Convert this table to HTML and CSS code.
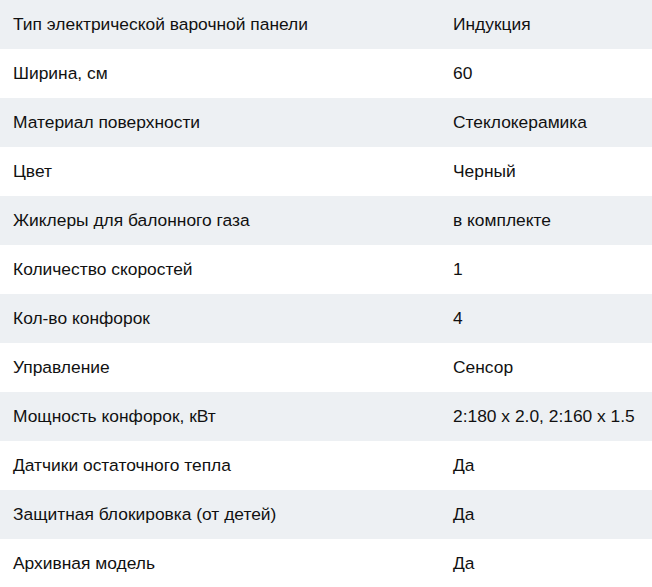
FILE: index.html
```html
<!DOCTYPE html>
<html lang="ru">
<head>
<meta charset="utf-8">
<link rel="stylesheet" href="styles.css">
</head>
<body>
<table class="specs">
  <tr><td class="name">Тип электрической варочной панели</td><td class="val">Индукция</td></tr>
  <tr><td class="name">Ширина, см</td><td class="val">60</td></tr>
  <tr><td class="name">Материал поверхности</td><td class="val">Стеклокерамика</td></tr>
  <tr><td class="name">Цвет</td><td class="val">Черный</td></tr>
  <tr><td class="name">Жиклеры для балонного газа</td><td class="val">в комплекте</td></tr>
  <tr><td class="name">Количество скоростей</td><td class="val">1</td></tr>
  <tr><td class="name">Кол-во конфорок</td><td class="val">4</td></tr>
  <tr><td class="name">Управление</td><td class="val">Сенсор</td></tr>
  <tr><td class="name">Мощность конфорок, кВт</td><td class="val">2:180 x 2.0, 2:160 x 1.5</td></tr>
  <tr><td class="name">Датчики остаточного тепла</td><td class="val">Да</td></tr>
  <tr><td class="name">Защитная блокировка (от детей)</td><td class="val">Да</td></tr>
  <tr><td class="name">Архивная модель</td><td class="val">Да</td></tr>
</table>
</body>
</html>
```

FILE: styles.css
```css
html, body {
  margin: 0;
  padding: 0;
  background: #fff;
}
.specs {
  width: 652px;
  border-collapse: collapse;
  font-family: "Liberation Sans", Arial, sans-serif;
  font-size: 17.4px;
  color: #111;
}
.specs tr:nth-child(odd) {
  background: #edf0f3;
}
.specs td {
  height: 49px;
  padding: 0 0 1px 13px;
  vertical-align: middle;
  box-sizing: border-box;
  white-space: nowrap;
}
.specs td.name {
  width: 440px;
}
```
